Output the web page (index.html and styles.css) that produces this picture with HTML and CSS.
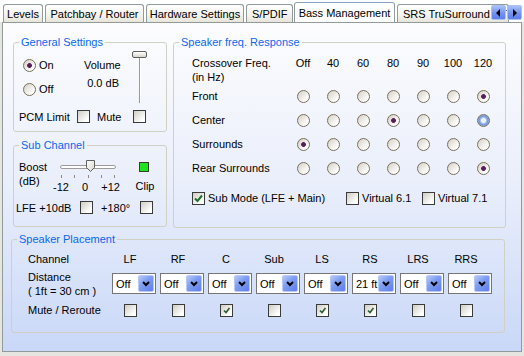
FILE: index.html
```html
<!DOCTYPE html>
<html lang="en">
<head>
    <meta charset="UTF-8">
    <meta name="viewport" content="width=device-width, initial-scale=1.0">
    <title>Bass Management</title>
    <link rel="stylesheet" href="styles.css">
</head>
<body>

    <div class="window">
        <!-- Tab strip -->
        <div class="tabstrip">
            <div class="tab tab-levels">Levels</div>
            <div class="tab tab-patchbay">Patchbay / Router</div>
            <div class="tab tab-hardware">Hardware Settings</div>
            <div class="tab tab-spdif">S/PDIF</div>
            <div class="tab tab-bass active">Bass Management</div>
            <div class="tab tab-srs">SRS TruSurround XT</div>
            <div class="tab-scroll">
                <span class="scroll-btn"><svg width="5" height="8" viewBox="0 0 5 8"><path d="M4 0 L0 4 L4 8 Z" fill="#000"/></svg></span>
                <span class="scroll-btn"><svg width="5" height="8" viewBox="0 0 5 8"><path d="M1 0 L5 4 L1 8 Z" fill="#000"/></svg></span>
            </div>
        </div>

        <div class="panel">
            <div class="top-row">
                <div class="left-col">
                    <!-- General Settings -->
                    <fieldset class="group general">
                        <legend>General Settings</legend>
                        <div class="general-top">
                            <div class="radio-col">
                                <div class="opt"><span class="radio checked"></span>On</div>
                                <div class="opt"><span class="radio"></span>Off</div>
                            </div>
                            <div class="volume-col">
                                <div>Volume</div>
                                <div class="volume-val">0.0 dB</div>
                            </div>
                            <div class="vslider">
                                <span class="vthumb"></span>
                                <span class="vtrack"></span>
                            </div>
                        </div>
                        <div class="general-bottom">
                            <span class="lbl-pcm">PCM Limit</span>
                            <span class="check"></span>
                            <span class="lbl-mute">Mute</span>
                            <span class="check"></span>
                        </div>
                    </fieldset>

                    <!-- Sub Channel -->
                    <fieldset class="group sub">
                        <legend>Sub Channel</legend>
                        <div class="sub-top">
                            <div class="sub-labels">Boost<br>(dB)</div>
                            <div class="hslider">
                                <div class="htrack"></div>
                                <svg class="hthumb" width="9" height="12" viewBox="0 0 9 12">
                                    <defs>
                                        <linearGradient id="thumbfill" x1="0" y1="0" x2="1" y2="1">
                                            <stop offset="0" stop-color="#ffffff"/>
                                            <stop offset="1" stop-color="#d8d6cc"/>
                                        </linearGradient>
                                    </defs>
                                    <path d="M0.5 0.5 H8.5 V7.5 L4.5 11.5 L0.5 7.5 Z" fill="url(#thumbfill)" stroke="#5f5f5f"/>
                                </svg>
                                <div class="ticks"><i></i><i></i><i></i><i></i><i></i></div>
                                <div class="tick-labels"><span>-12</span><span>0</span><span>+12</span></div>
                            </div>
                            <div class="clip">
                                <span class="clip-led"></span>
                                <span class="clip-lbl">Clip</span>
                            </div>
                        </div>
                        <div class="sub-bottom">
                            <span class="lbl-lfe">LFE +10dB</span>
                            <span class="check"></span>
                            <span class="lbl-phase">+180°</span>
                            <span class="check"></span>
                        </div>
                    </fieldset>
                </div>

                <!-- Speaker freq. Response -->
                <fieldset class="group freq">
                    <legend>Speaker freq. Response</legend>
                    <div class="freq-grid">
                        <div class="freq-head">Crossover Freq.<br>(in Hz)</div>
                        <div class="col-head">Off</div>
                        <div class="col-head">40</div>
                        <div class="col-head">60</div>
                        <div class="col-head">80</div>
                        <div class="col-head">90</div>
                        <div class="col-head">100</div>
                        <div class="col-head">120</div>

                        <div class="row-lbl">Front</div>
                        <div class="cell"><span class="radio"></span></div>
                        <div class="cell"><span class="radio"></span></div>
                        <div class="cell"><span class="radio"></span></div>
                        <div class="cell"><span class="radio"></span></div>
                        <div class="cell"><span class="radio"></span></div>
                        <div class="cell"><span class="radio"></span></div>
                        <div class="cell"><span class="radio checked"></span></div>

                        <div class="row-lbl">Center</div>
                        <div class="cell"><span class="radio"></span></div>
                        <div class="cell"><span class="radio"></span></div>
                        <div class="cell"><span class="radio"></span></div>
                        <div class="cell"><span class="radio checked"></span></div>
                        <div class="cell"><span class="radio"></span></div>
                        <div class="cell"><span class="radio"></span></div>
                        <div class="cell"><span class="radio hot"></span></div>

                        <div class="row-lbl">Surrounds</div>
                        <div class="cell"><span class="radio checked"></span></div>
                        <div class="cell"><span class="radio"></span></div>
                        <div class="cell"><span class="radio"></span></div>
                        <div class="cell"><span class="radio"></span></div>
                        <div class="cell"><span class="radio"></span></div>
                        <div class="cell"><span class="radio"></span></div>
                        <div class="cell"><span class="radio"></span></div>

                        <div class="row-lbl">Rear Surrounds</div>
                        <div class="cell"><span class="radio"></span></div>
                        <div class="cell"><span class="radio"></span></div>
                        <div class="cell"><span class="radio"></span></div>
                        <div class="cell"><span class="radio"></span></div>
                        <div class="cell"><span class="radio"></span></div>
                        <div class="cell"><span class="radio"></span></div>
                        <div class="cell"><span class="radio checked"></span></div>
                    </div>
                    <div class="freq-checks">
                        <div class="opt opt-submode"><span class="check checked"><svg width="11" height="11" viewBox="0 0 11 11"><path d="M2 5.5 L4.5 8 L9 2.5" fill="none" stroke="#21702a" stroke-width="2"/></svg></span>Sub Mode (LFE + Main)</div>
                        <div class="opt opt-v61"><span class="check"></span>Virtual 6.1</div>
                        <div class="opt"><span class="check"></span>Virtual 7.1</div>
                    </div>
                </fieldset>
            </div>

            <!-- Speaker Placement -->
            <fieldset class="group placement">
                <legend>Speaker Placement</legend>
                <div class="place-grid">
                    <div class="place-lbl">Channel</div>
                    <div class="ch-head">LF</div>
                    <div class="ch-head">RF</div>
                    <div class="ch-head">C</div>
                    <div class="ch-head">Sub</div>
                    <div class="ch-head">LS</div>
                    <div class="ch-head">RS</div>
                    <div class="ch-head">LRS</div>
                    <div class="ch-head">RRS</div>

                    <div class="place-lbl">Distance<br>( 1ft = 30 cm )</div>
                    <div class="combo"><span class="combo-val">Off</span><span class="combo-btn"><svg width="8" height="6" viewBox="0 0 8 6"><path d="M1 1 L4 4 L7 1" fill="none" stroke="#000" stroke-width="2"/></svg></span></div>
                    <div class="combo"><span class="combo-val">Off</span><span class="combo-btn"><svg width="8" height="6" viewBox="0 0 8 6"><path d="M1 1 L4 4 L7 1" fill="none" stroke="#000" stroke-width="2"/></svg></span></div>
                    <div class="combo"><span class="combo-val">Off</span><span class="combo-btn"><svg width="8" height="6" viewBox="0 0 8 6"><path d="M1 1 L4 4 L7 1" fill="none" stroke="#000" stroke-width="2"/></svg></span></div>
                    <div class="combo"><span class="combo-val">Off</span><span class="combo-btn"><svg width="8" height="6" viewBox="0 0 8 6"><path d="M1 1 L4 4 L7 1" fill="none" stroke="#000" stroke-width="2"/></svg></span></div>
                    <div class="combo"><span class="combo-val">Off</span><span class="combo-btn"><svg width="8" height="6" viewBox="0 0 8 6"><path d="M1 1 L4 4 L7 1" fill="none" stroke="#000" stroke-width="2"/></svg></span></div>
                    <div class="combo"><span class="combo-val">21 ft</span><span class="combo-btn"><svg width="8" height="6" viewBox="0 0 8 6"><path d="M1 1 L4 4 L7 1" fill="none" stroke="#000" stroke-width="2"/></svg></span></div>
                    <div class="combo"><span class="combo-val">Off</span><span class="combo-btn"><svg width="8" height="6" viewBox="0 0 8 6"><path d="M1 1 L4 4 L7 1" fill="none" stroke="#000" stroke-width="2"/></svg></span></div>
                    <div class="combo"><span class="combo-val">Off</span><span class="combo-btn"><svg width="8" height="6" viewBox="0 0 8 6"><path d="M1 1 L4 4 L7 1" fill="none" stroke="#000" stroke-width="2"/></svg></span></div>

                    <div class="place-lbl mid">Mute / Reroute</div>
                    <div class="cell-check"><span class="check"></span></div>
                    <div class="cell-check"><span class="check"></span></div>
                    <div class="cell-check"><span class="check checked"><svg width="11" height="11" viewBox="0 0 11 11"><path d="M3 5.5 L5 7.5 L8.5 3" fill="none" stroke="#2b5a30" stroke-width="1.6"/></svg></span></div>
                    <div class="cell-check"><span class="check"></span></div>
                    <div class="cell-check"><span class="check checked"><svg width="11" height="11" viewBox="0 0 11 11"><path d="M3 5.5 L5 7.5 L8.5 3" fill="none" stroke="#2b5a30" stroke-width="1.6"/></svg></span></div>
                    <div class="cell-check"><span class="check checked"><svg width="11" height="11" viewBox="0 0 11 11"><path d="M3 5.5 L5 7.5 L8.5 3" fill="none" stroke="#2b5a30" stroke-width="1.6"/></svg></span></div>
                    <div class="cell-check"><span class="check"></span></div>
                    <div class="cell-check"><span class="check"></span></div>
                </div>
            </fieldset>
        </div>
    </div>

</body>
</html>
```

FILE: styles.css
```css
/* Global styles */
body {
    margin: 0;
    background-color: #e6e5df;
    font-family: "Liberation Sans", Arial, sans-serif;
    font-size: 11px;
    color: #000;
}

.window {
    width: 524px;
    height: 356px;
}

/* Tab strip */
.tabstrip {
    position: relative;
    z-index: 1;
    display: flex;
    align-items: flex-end;
    height: 22px;
    padding-left: 3px;
    background-color: #fff;
    overflow: hidden;
}

.tab {
    box-sizing: border-box;
    flex: none;
    height: 18px;
    margin-right: 2px;
    padding-top: 1px;
    line-height: 16px;
    text-align: center;
    white-space: nowrap;
    overflow: hidden;
    border: 1px solid #919b9c;
    border-bottom: none;
    border-radius: 3px 3px 0 0;
    background: linear-gradient(#ffffff, #f4f3ee 60%, #e6e4da);
}

.tab-levels { width: 40px; }
.tab-patchbay { width: 99px; }
.tab-hardware { width: 98px; }
.tab-spdif { width: 47px; text-align: left; padding-left: 5px; }
.tab-srs { width: 112px; text-align: left; padding-left: 5px; }

.tab.active {
    position: relative;
    z-index: 2;
    width: 101px;
    height: 21px;
    margin-left: -1px;
    margin-bottom: -1px;
    padding-top: 2px;
    border-top-color: #8da2c8;
    background: #fff;
}

/* Scroll arrows over the clipped last tab */
.tab-scroll {
    position: absolute;
    right: 2px;
    top: 5px;
    display: flex;
    gap: 1px;
    z-index: 3;
}

.scroll-btn {
    box-sizing: border-box;
    display: flex;
    align-items: center;
    justify-content: center;
    width: 15px;
    height: 15px;
    border: 1px solid #a9c0f5;
    border-radius: 2px;
    background: linear-gradient(#a8c0fa, #7393f0 55%, #5c7fe8);
}

/* Tab page */
.panel {
    box-sizing: border-box;
    width: 520px;
    height: 330px;
    margin-left: 2px;
    padding: 13px 0 0 10px;
    border: 1px solid #919b9c;
    background: linear-gradient(#fdfdfe, #e9eefb 50%, #c9d8f8);
}

.top-row {
    display: flex;
    gap: 6px;
    height: 192px;
}

.left-col {
    display: flex;
    flex-direction: column;
    gap: 7px;
    width: 154px;
}

/* Group boxes */
.group {
    box-sizing: border-box;
    min-width: 0;
    margin: 0;
    padding: 0;
    border: 1px solid #d0d0c4;
    border-radius: 3px;
}

.group legend {
    margin-left: 5px;
    padding: 0 2px;
    line-height: 13px;
    color: #0a68f2;
}

.general { height: 96px; }
.sub { height: 88px; }
.freq { width: 333px; height: 192px; }

.placement {
    width: 494px;
    height: 100px;
    margin: 5px 0 0 -2px;
}

/* Radio buttons and check boxes */
.radio {
    box-sizing: border-box;
    display: inline-block;
    flex: none;
    width: 13px;
    height: 13px;
    border: 1px solid #7a6f5c;
    border-radius: 50%;
    background: linear-gradient(135deg, #d3d0c4, #ffffff 80%);
}

.radio.checked {
    background: radial-gradient(circle, #5c1c5c 0 2px, rgba(92, 28, 92, 0) 2.8px),
                linear-gradient(135deg, #d3d0c4, #ffffff 80%);
}

.radio.hot {
    background: radial-gradient(circle, #eef3fd 0 2px, #a9c3ef 3px, #6b93dc 4.5px, #9fb8e6 5.5px);
}

.check {
    box-sizing: border-box;
    display: inline-flex;
    align-items: center;
    justify-content: center;
    flex: none;
    width: 13px;
    height: 13px;
    border: 1px solid #3a3a3a;
    background: linear-gradient(135deg, #cfcdc3, #ffffff 80%);
}

.opt {
    display: flex;
    align-items: center;
    gap: 3px;
    height: 14px;
}

/* General Settings */
.general-top {
    display: flex;
    height: 55px;
}

.radio-col {
    display: flex;
    flex-direction: column;
    gap: 10px;
    width: 61px;
    padding: 9px 0 0 9px;
}

.volume-col {
    width: 35px;
    padding-top: 9px;
    line-height: 14px;
    text-align: right;
}

.volume-val {
    margin-top: 4px;
}

.vslider {
    display: flex;
    flex-direction: column;
    align-items: center;
    width: 15px;
    margin-left: 13px;
    padding-top: 2px;
}

.vthumb {
    box-sizing: border-box;
    width: 15px;
    height: 7px;
    border: 1px solid #5f5f5f;
    border-radius: 2px;
    background: linear-gradient(#ffffff, #d6d4ca);
}

.vtrack {
    width: 2px;
    height: 45px;
    border-left: 1px solid #9a9a9a;
    background-color: #fff;
    box-sizing: border-box;
}

.general-bottom {
    display: flex;
    align-items: center;
    height: 13px;
    margin-top: 6px;
    padding-left: 5px;
}

.lbl-pcm { width: 58px; }
.lbl-mute { width: 36px; margin-left: 7px; }

/* Sub Channel */
.sub-top {
    display: flex;
    height: 43px;
}

.sub-labels {
    width: 37px;
    padding: 8px 0 0 5px;
    line-height: 14px;
}

.hslider {
    position: relative;
    width: 70px;
}

.htrack {
    box-sizing: border-box;
    width: 56px;
    height: 4px;
    margin: 13px 0 0 4px;
    border: 1px solid #9c9c9c;
    border-radius: 2px;
    background-color: #fff;
}

.hthumb {
    position: absolute;
    left: 30px;
    top: 8px;
}

.ticks {
    display: flex;
    justify-content: space-between;
    width: 54px;
    margin: 6px 0 0 5px;
}

.ticks i {
    width: 1px;
    height: 3px;
    background-color: #8a8a8a;
}

.tick-labels {
    display: flex;
    justify-content: space-between;
    width: 67px;
    margin: 2px 0 0 -3px;
    line-height: 14px;
}

.clip {
    display: flex;
    flex-direction: column;
    align-items: center;
    width: 22px;
    margin-left: 8px;
}

.clip-led {
    box-sizing: border-box;
    width: 10px;
    height: 10px;
    margin: 10px 0 0 -3px;
    border: 1px solid #3a3a3a;
    background-color: #1ee61e;
}

.clip-lbl {
    margin-top: 7px;
    line-height: 14px;
}

.sub-bottom {
    display: flex;
    align-items: center;
    height: 13px;
    margin-top: 6px;
    padding-left: 2px;
}

.lbl-lfe { width: 64px; }
.lbl-phase { width: 39px; margin-left: 8px; }

/* Speaker freq. Response */
.freq-grid {
    display: grid;
    grid-template-columns: 96px repeat(7, 30px);
    grid-template-rows: 28px repeat(4, 24px);
    padding: 7px 0 0 18px;
    line-height: 14px;
}

.col-head {
    text-align: center;
}

.row-lbl {
    align-self: center;
}

.cell {
    display: flex;
    align-items: center;
    justify-content: center;
}

.freq-checks {
    display: flex;
    margin: 11px 0 0 18px;
}

.opt-submode { width: 154px; }
.opt-v61 { width: 76px; }

/* Speaker Placement */
.place-grid {
    display: grid;
    grid-template-columns: 84px repeat(8, 48px);
    grid-template-rows: 18px 32px 16px;
    padding: 6px 0 0 16px;
    line-height: 14px;
}

.place-lbl.mid {
    align-self: center;
}

.ch-head {
    width: 36px;
    text-align: center;
}

.combo {
    box-sizing: border-box;
    display: flex;
    align-items: center;
    width: 44px;
    height: 21px;
    margin-top: 3px;
    padding: 1px;
    border: 1px solid #767676;
    background-color: #fff;
}

.combo-val {
    flex: 1;
    padding-left: 2px;
    white-space: nowrap;
}

.combo-btn {
    box-sizing: border-box;
    display: flex;
    align-items: center;
    justify-content: center;
    width: 16px;
    height: 17px;
    border: 1px solid #b6c8f6;
    border-radius: 2px;
    background: linear-gradient(135deg, #b4c8fb, #7d9cf1 45%, #5d80ea);
}

.cell-check {
    display: flex;
    align-items: center;
    padding-left: 12px;
}
```
